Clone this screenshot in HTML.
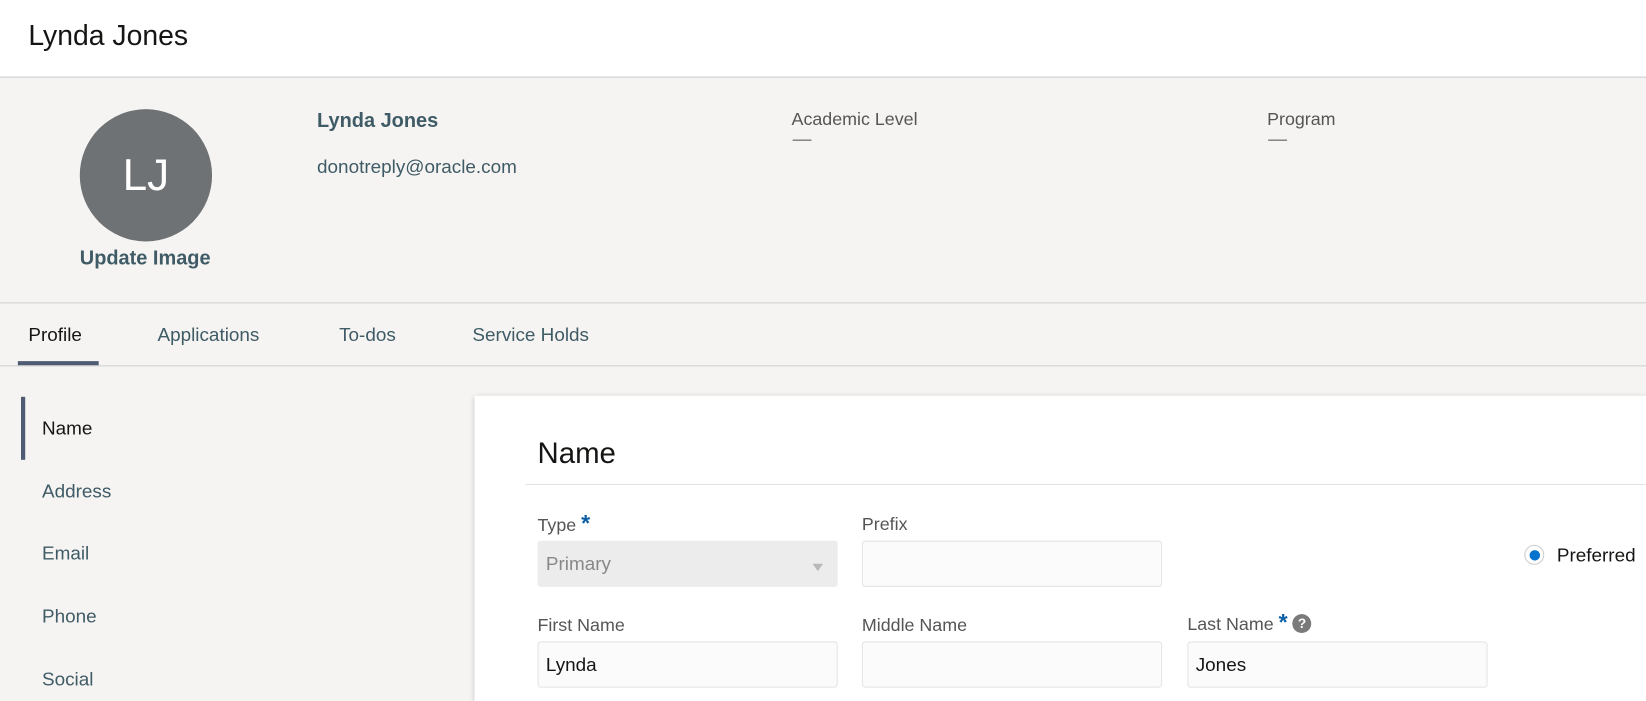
<!DOCTYPE html>
<html><head><style>
*{margin:0;padding:0;box-sizing:border-box}
html,body{width:1646px;height:701px;overflow:hidden;background:#f5f4f2}
body{font-family:"Liberation Sans",sans-serif;color:#161513}
#w{position:absolute;left:0;top:0;width:1568px;height:668px;transform:scale(1.0498);transform-origin:0 0;overflow:hidden}
.a{position:absolute;white-space:nowrap}
.lbl{font-size:17px;color:#555}
.inp{position:absolute;height:44px;background:#fbfbfb;border:1px solid #e4e4e4;border-radius:3px;font-size:18px;padding:11px 7px;color:#161513}
.star{color:#0b5fa5;font-size:22px;font-weight:bold}
.nav{position:absolute;left:40px;font-size:18px;color:#3f5b66}
.tab{position:absolute;top:309px;font-size:18px;color:#3f5b66}
</style></head><body><div id="w">
<div class="a" style="left:0;top:0;width:1568px;height:74px;background:#fff;border-bottom:1px solid #c9c9c9"></div>
<div class="a" style="left:27px;top:19px;font-size:27px">Lynda Jones</div>

<div class="a" style="left:76px;top:104px;width:126px;height:126px;border-radius:50%;background:#6e7275;color:#fff;font-size:42px;text-align:center;line-height:126px">LJ</div>
<div class="a" style="left:76px;top:236px;font-size:19px;font-weight:bold;color:#3f5b66">Update Image</div>
<div class="a" style="left:302px;top:105px;font-size:19px;font-weight:bold;color:#3f5b66">Lynda Jones</div>
<div class="a" style="left:302px;top:149px;font-size:18px;color:#3f5b66">donotreply@oracle.com</div>
<div class="a" style="left:754px;top:104px;font-size:17px;color:#555">Academic Level</div>
<div class="a" style="left:755px;top:133px;width:18px;height:1px;background:#555"></div>
<div class="a" style="left:1207px;top:104px;font-size:17px;color:#555">Program</div>
<div class="a" style="left:1208px;top:133px;width:18px;height:1px;background:#555"></div>

<div class="a" style="left:0;top:288px;width:1568px;height:1px;background:#cfcfcf"></div>
<div class="tab" style="left:27px;color:#161513">Profile</div>
<div class="a" style="left:17px;top:344px;width:77px;height:4px;background:#4f5a73"></div>
<div class="tab" style="left:150px">Applications</div>
<div class="tab" style="left:323px">To-dos</div>
<div class="tab" style="left:450px">Service Holds</div>
<div class="a" style="left:0;top:348px;width:1568px;height:1px;background:#cfcfcf"></div>

<div class="a" style="left:20px;top:378px;width:4px;height:60px;background:#4f5a73"></div>
<div class="nav" style="top:398px;color:#161513">Name</div>
<div class="nav" style="top:458px">Address</div>
<div class="nav" style="top:517px">Email</div>
<div class="nav" style="top:577px">Phone</div>
<div class="nav" style="top:637px">Social</div>

<div class="a" style="left:452px;top:377px;width:1116px;height:291px;background:#fff;box-shadow:0 1px 5px rgba(0,0,0,.2)"></div>
<div class="a" style="left:512px;top:416px;font-size:28px">Name</div>
<div class="a" style="left:500px;top:461px;width:1068px;height:1px;background:#e4e4e4"></div>

<div class="a lbl" style="left:512px;top:486px">Type <span class="star">*</span></div>
<div class="inp" style="left:512px;top:515px;width:286px;background:#ececec;border-color:#ececec;color:#888">Primary</div>
<div class="a" style="left:774px;top:537px;width:0;height:0;border-left:5px solid transparent;border-right:5px solid transparent;border-top:7px solid #b8b8b8"></div>
<div class="a lbl" style="left:821px;top:490px">Prefix</div>
<div class="inp" style="left:821px;top:515px;width:286px"></div>
<div class="a" style="left:1452px;top:519px;width:19px;height:19px;border-radius:50%;border:1px solid #ccc;background:#fff"></div>
<div class="a" style="left:1457px;top:524px;width:10px;height:10px;border-radius:50%;background:#0572ce"></div>
<div class="a" style="left:1483px;top:519px;font-size:18px">Preferred</div>

<div class="a lbl" style="left:512px;top:586px">First Name</div>
<div class="inp" style="left:512px;top:611px;width:286px">Lynda</div>
<div class="a lbl" style="left:821px;top:586px">Middle Name</div>
<div class="inp" style="left:821px;top:611px;width:286px"></div>
<div class="a lbl" style="left:1131px;top:580px">Last Name <span class="star">*</span> <span style="display:inline-block;width:18px;height:18px;border-radius:50%;background:#7a7a7a;color:#fff;font-size:13px;font-weight:bold;text-align:center;line-height:18px;vertical-align:2px">?</span></div>
<div class="inp" style="left:1131px;top:611px;width:286px">Jones</div>
</div></body></html>
